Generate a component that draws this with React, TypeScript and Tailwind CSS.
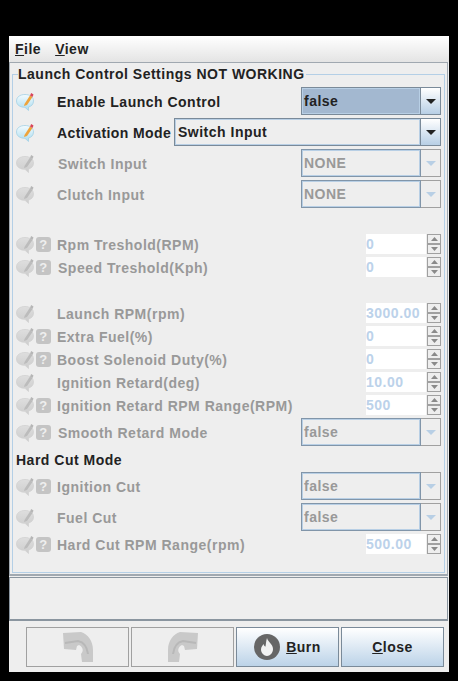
import type { ReactNode } from 'react';

const EDGE = 'border-[#7a8a99]';

function NoteIcon({ active }: { active: boolean }) {
  const id = active ? 'noteOn' : 'noteOff';
  return (
    <svg width="18" height="19" viewBox="0 0 18 19" className="shrink-0">
      <defs>
        <linearGradient id={id} x1="0" y1="0" x2="0" y2="1">
          <stop offset="0" stopColor={active ? '#f4fbfe' : '#dedede'} />
          <stop offset="1" stopColor={active ? '#a9dcf0' : '#cdcdcd'} />
        </linearGradient>
      </defs>
      <path
        d="M0.500 9 C0.500 5 4 2.500 9 2.500 C14 2.500 17.500 5 17.500 9 C17.500 12.500 15 14.500 12.500 15 L12.500 18.500 L9 15.300 C4 15.300 0.500 13 0.500 9 Z"
        fill={`url(#${id})`}
        stroke={active ? '#a3d0e4' : '#d2d2d2'}
        strokeWidth="0.8"
      />
      <path d="M8.500 12 L14 3.500 L16.500 5 L11 13 L8 14 Z" fill={active ? '#eea43c' : '#bcbcbc'} />
      <path d="M14 3.500 L15.200 1 L17.500 2.500 L16.500 5 Z" fill={active ? '#d9455a' : '#b6b6b6'} />
    </svg>
  );
}

function HelpIcon() {
  return (
    <div className="ml-[2px] flex h-[15px] w-[15px] shrink-0 items-center justify-center rounded-[3px] bg-[#c4c4c4] text-[13px] font-bold leading-none text-[#eeeeee]">
      ?
    </div>
  );
}

function Arrow({ color }: { color: string }) {
  return (
    <svg width="10" height="5" viewBox="0 0 10 5">
      <path d="M0 0 L10 0 L5 5 Z" fill={color} />
    </svg>
  );
}

function Combo({ value, on, selected, wide }: { value: string; on?: boolean; selected?: boolean; wide?: boolean }) {
  return (
    <div className={`flex h-[28px] shrink-0 ${wide ? 'w-[267px]' : 'w-[140px]'}`}>
      <div className={`min-w-0 flex-1 border ${on ? EDGE : 'border-[#8195a9]'}`}>
        <div
          className={`flex h-full items-center border ${wide ? 'pl-[2px]' : 'pl-[1px]'} ${
            on
              ? `border-[#b8cfe5] ${selected ? 'bg-[#a3b8d0]' : 'bg-[#eeeeee]'} text-[#222222]`
              : 'border-[#b8cfe5] bg-[#eeeeee] text-[#999999]'
          }`}
        >
          {value}
        </div>
      </div>
      <div
        className={`flex w-[20px] items-center justify-center border border-l-0 ${
          on ? `${EDGE} bg-gradient-to-b from-white to-[#b8cfe5]` : 'border-[#a0a0a0] bg-[#eeeeee]'
        }`}
      >
        <Arrow color={on ? '#222222' : '#b8cfe5'} />
      </div>
    </div>
  );
}

function SpinButton({ up }: { up?: boolean }) {
  return (
    <div className="flex h-[10px] w-[14px] items-center justify-center border border-[#a0a0a0] bg-[#eeeeee]">
      <svg width="7" height="4" viewBox="0 0 7 4">
        <path d={up ? 'M3.500 0 L7 4 L0 4 Z' : 'M0 0 L7 0 L3.500 4 Z'} fill="#8a8a8a" />
      </svg>
    </div>
  );
}

function Spinner({ value }: { value: string }) {
  return (
    <div className="flex h-[20px] w-[75px] shrink-0">
      <div className="flex w-[60px] items-center bg-white text-[#bcd2ea]">{value}</div>
      <div className="ml-[1px] flex flex-col">
        <SpinButton up />
        <SpinButton />
      </div>
    </div>
  );
}

interface RowProps {
  label: string;
  on?: boolean;
  help?: boolean;
  top?: string;
  nudge?: boolean;
  children: ReactNode;
}

function Row({ label, on, help, top = 'mt-[3px]', nudge, children }: RowProps) {
  return (
    <div className={`flex items-center justify-between ${top}`}>
      <div className="flex items-center">
        <NoteIcon active={!!on} />
        {help ? <HelpIcon /> : <div className="w-[17px] shrink-0" />}
        <span className={`${nudge ? 'ml-[7px]' : 'ml-[6px]'} mt-[2px] whitespace-nowrap ${on ? 'text-[#222222]' : 'text-[#999999]'}`}>
          {label}
        </span>
      </div>
      {children}
    </div>
  );
}

function UndoIcon({ flip }: { flip?: boolean }) {
  return (
    <svg width="30" height="30" viewBox="0 0 30 30" className={flip ? '-scale-x-100' : ''}>
      <path
        d="M0 1 L18 0 C25 2 30 9 30 18 L30 30 L19 30 L18 22 C21 19 20 15 16 13 L14 14 L13 18 L1 17 Z"
        fill="#c9c9c9"
      />
      <path d="M2 11 L15 9 C20 10 24 14 25 22" fill="none" stroke="#b8b8b8" strokeWidth="2" />
    </svg>
  );
}

function ToolButton({ children, on }: { children: ReactNode; on?: boolean }) {
  return (
    <div
      className={`flex h-[40px] w-[103px] items-center justify-center border ${
        on ? `${EDGE} bg-gradient-to-b from-white to-[#bcd3e8]` : 'border-[#a0a0a0] bg-[#eeeeee]'
      }`}
    >
      {children}
    </div>
  );
}

export default function App() {
  return (
    <div className="h-[681px] w-[458px] overflow-hidden bg-black pl-[9px] pt-[36px] font-['Liberation_Sans',sans-serif] text-[14px] font-bold leading-[17px] tracking-[0.5px]">
      <div className="h-[636px] w-[440px] bg-[#eeeeee]">
        <div className="flex h-[26px] items-center gap-[14px] bg-gradient-to-b from-white to-[#e4e4e4] pl-[6px] text-[#222222]">
          <span><u>F</u>ile</span>
          <span><u>V</u>iew</span>
        </div>
        <div className="mr-[1px] h-[514px] border border-b-2 border-[#a0a8b0] px-[2px] pt-[11px]">
          <div className="relative h-[499px] border border-[#b4cfe6] px-[3px] pt-[12px]">
            <div className="absolute -top-[9px] left-[5px] bg-[#eeeeee] pr-[1px] text-[#222222]">
              Launch Control Settings NOT WORKING
            </div>
            <Row label="Enable Launch Control" on top="mt-0">
              <Combo value="false" on selected />
            </Row>
            <div className="mt-[3px] flex items-center justify-between">
              <div className="flex items-center">
                <NoteIcon active />
                <span className="ml-[23px] mt-[2px] whitespace-nowrap tracking-[0.4px] text-[#222222]">Activation Mode</span>
              </div>
              <Combo value="Switch Input" on wide />
            </div>
            <Row label="Switch Input" nudge>
              <Combo value="NONE" />
            </Row>
            <Row label="Clutch Input">
              <Combo value="NONE" />
            </Row>
            <Row label="Rpm Treshold(RPM)" help top="mt-[26px]">
              <Spinner value="0" />
            </Row>
            <Row label="Speed Treshold(Kph)" help nudge>
              <Spinner value="0" />
            </Row>
            <Row label="Launch RPM(rpm)" top="mt-[26px]">
              <Spinner value="3000.00" />
            </Row>
            <Row label="Extra Fuel(%)" help>
              <Spinner value="0" />
            </Row>
            <Row label="Boost Solenoid Duty(%)" help>
              <Spinner value="0" />
            </Row>
            <Row label="Ignition Retard(deg)">
              <Spinner value="10.00" />
            </Row>
            <Row label="Ignition Retard RPM Range(RPM)" help>
              <Spinner value="500" />
            </Row>
            <Row label="Smooth Retard Mode" help nudge>
              <Combo value="false" />
            </Row>
            <div className="mt-[4px] h-[20px] leading-[20px] text-[#222222]">Hard Cut Mode</div>
            <Row label="Ignition Cut" help top="mt-[2px]">
              <Combo value="false" />
            </Row>
            <Row label="Fuel Cut">
              <Combo value="false" />
            </Row>
            <Row label="Hard Cut RPM Range(rpm)" help>
              <Spinner value="500.00" />
            </Row>
          </div>
        </div>
        <div className="mr-[1px] mt-[1px] h-[44px] border border-b-2 border-[#8a959f]" />
        <div className="mt-[6px] flex gap-[2px] pl-[17px]">
          <ToolButton><UndoIcon /></ToolButton>
          <ToolButton><UndoIcon flip /></ToolButton>
          <ToolButton on>
            <svg width="26" height="26" viewBox="0 0 26 26" className="mr-[6px]">
              <circle cx="13" cy="13" r="13" fill="#666666" />
              <path
                d="M13 4 C14 8 19 10 19 15 C19 19 16 22 13 22 C10 22 7 19 7 15.500 C7 13 8.500 11.500 9.500 10 C10 12 11 12.500 11.500 12.500 C12 10 12 7 13 4 Z"
                fill="#f2f2f2"
              />
            </svg>
            <span className="text-[#222222]"><u>B</u>urn</span>
          </ToolButton>
          <ToolButton on>
            <span className="text-[#222222]"><u>C</u>lose</span>
          </ToolButton>
        </div>
      </div>
    </div>
  );
}
